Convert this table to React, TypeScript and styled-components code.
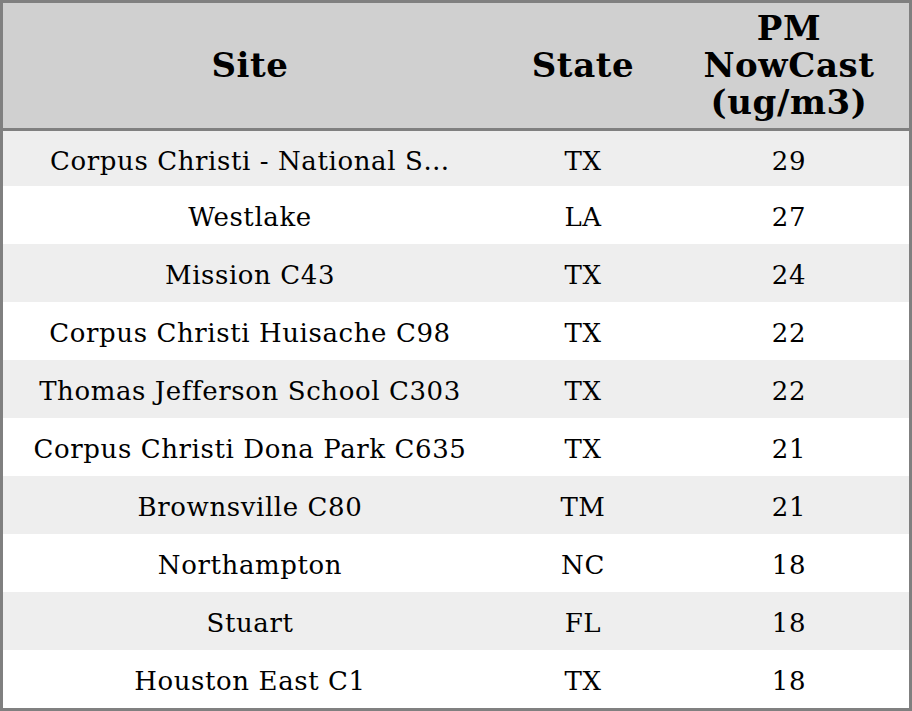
import React from "react";
import styled, { createGlobalStyle } from "styled-components";

interface SiteRow {
  site: string;
  state: string;
  pm: number;
}

const rows: SiteRow[] = [
  { site: "Corpus Christi - National S…", state: "TX", pm: 29 },
  { site: "Westlake", state: "LA", pm: 27 },
  { site: "Mission C43", state: "TX", pm: 24 },
  { site: "Corpus Christi Huisache C98", state: "TX", pm: 22 },
  { site: "Thomas Jefferson School C303", state: "TX", pm: 22 },
  { site: "Corpus Christi Dona Park C635", state: "TX", pm: 21 },
  { site: "Brownsville C80", state: "TM", pm: 21 },
  { site: "Northampton", state: "NC", pm: 18 },
  { site: "Stuart", state: "FL", pm: 18 },
  { site: "Houston East C1", state: "TX", pm: 18 },
];

const GlobalStyle = createGlobalStyle`
  html, body {
    margin: 0;
    padding: 0;
    background: #ffffff;
  }
`;

const App = () => {
  return (
    <>
      <GlobalStyle />
      <Frame>
        <Table>
          <colgroup>
            <col style={{ width: 494 }} />
            <col style={{ width: 172 }} />
            <col style={{ width: 240 }} />
          </colgroup>
          <thead>
            <tr>
              <HeadCell>Site</HeadCell>
              <HeadCell>State</HeadCell>
              <HeadCell>
                PM
                <br />
                NowCast
                <br />
                (ug/m3)
              </HeadCell>
            </tr>
          </thead>
          <tbody>
            {rows.map((r, i) => (
              <Row key={i} $striped={i % 2 === 0}>
                <Cell>{r.site}</Cell>
                <Cell>{r.state}</Cell>
                <Cell>{r.pm}</Cell>
              </Row>
            ))}
          </tbody>
        </Table>
      </Frame>
    </>
  );
};

const Frame = styled.div`
  width: 912px;
  height: 711px;
  box-sizing: border-box;
  border: 3px solid #808080;
  overflow: hidden;
  background: #ffffff;
`;

const Table = styled.table`
  width: 906px;
  border-collapse: collapse;
  table-layout: fixed;
  font-family: "DejaVu Serif", serif;
  color: #000000;
`;

const HeadCell = styled.th`
  height: 125px;
  padding: 0;
  background: #d0d0d0;
  border-bottom: 3px solid #808080;
  font-size: 34px;
  letter-spacing: 0.6px;
  font-weight: bold;
  line-height: 37px;
  text-align: center;
  vertical-align: middle;
`;

const Row = styled.tr<{ $striped: boolean }>`
  height: 58px;
  background: ${(p) => (p.$striped ? "#eeeeee" : "#ffffff")};

  &:first-child {
    height: 56px;
  }

  &:last-child {
    height: 57px;
  }
`;

const Cell = styled.td`
  padding: 5px 0 0;
  font-size: 26px;
  letter-spacing: 0.6px;
  text-align: center;
  vertical-align: middle;
  white-space: nowrap;
`;

export default App;
